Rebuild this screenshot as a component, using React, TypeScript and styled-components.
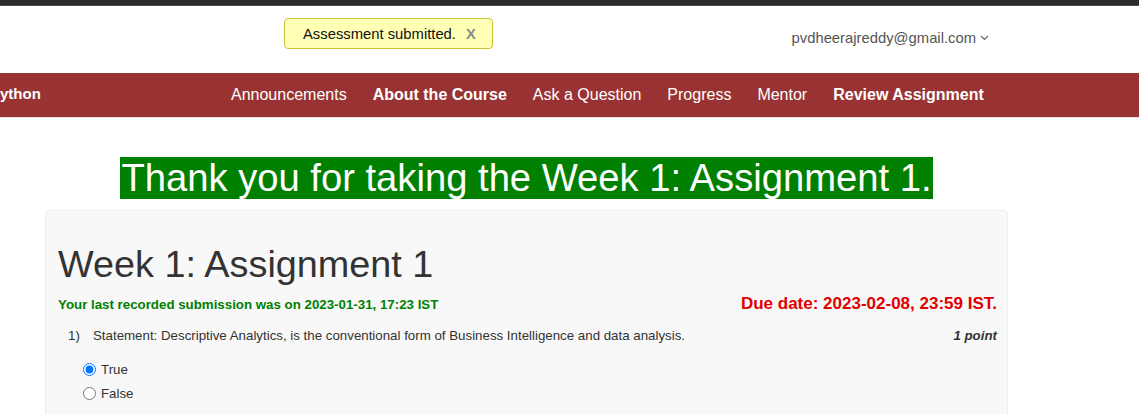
import React from "react";
import styled, { createGlobalStyle } from "styled-components";

const Global = createGlobalStyle`
  html, body { margin: 0; padding: 0; background: #fff; }
  body { font-family: "Liberation Sans", Arial, sans-serif; overflow: hidden; }
  * { box-sizing: border-box; }
`;

const TopStrip = styled.div`
  height: 6px;
  background: #2b2b2d;
  border-bottom: 1px solid #4a4a4c;
`;

const Header = styled.header`
  height: 67px;
  display: flex;
  align-items: flex-start;
`;

const Toast = styled.div`
  margin: 12px 0 0 284px;
  width: 209px;
  height: 31px;
  background: #ffffb5;
  border: 1px solid #c9c43a;
  border-radius: 4px;
  display: flex;
  align-items: center;
  padding-left: 18px;
  font-size: 14.8px;
  color: #111;
`;

const Close = styled.span`
  margin-left: 10px;
  font-weight: bold;
  color: #888;
  font-size: 14.8px;
`;

const User = styled.div`
  margin: 18px 150px 0 auto;
  display: flex;
  align-items: center;
  gap: 4px;
  font-size: 14.8px;
  color: #555;
  height: 28px;
`;

const NavBar = styled.nav`
  height: 45px;
  background: #993333;
  border-bottom: 1px solid #e3e3e3;
  display: flex;
  align-items: center;
`;

const Brand = styled.div`
  width: 218px;
  overflow: hidden;
  white-space: nowrap;
  font-weight: bold;
  color: #fff;
  font-size: 15px;
  text-indent: -10px;
  margin-top: -3px;
`;

const NavLink = styled.a<{ $bold?: boolean }>`
  padding: 0 13px;
  color: #fff;
  font-size: 16px;
  font-weight: ${(p) => (p.$bold ? "bold" : "normal")};
  text-decoration: none;
  white-space: nowrap;
`;

const Main = styled.main`
  width: 963px;
  margin-left: 45px;
  padding-top: 39px;
`;

const ThanksWrap = styled.div`
  display: flex;
  justify-content: center;
`;

const Thanks = styled.h1`
  margin: 0;
  background: #008000;
  color: #fff;
  font-size: 38.2px;
  font-weight: normal;
  line-height: 42px;
  padding: 0 1px;
  white-space: nowrap;
`;

const Card = styled.section`
  margin-top: 11px;
  background: #f8f8f8;
  border: 1px solid #ededed;
  border-radius: 4px;
  padding: 0 10px 20px 12px;
  height: 230px;
`;

const Title = styled.h2`
  margin: 32px 0 0 0;
  font-size: 37.8px;
  font-weight: normal;
  color: #333;
  line-height: 42px;
`;

const MetaRow = styled.div`
  display: flex;
  justify-content: space-between;
  align-items: center;
  margin-top: 9px;
`;

const Submitted = styled.div`
  color: #008000;
  font-weight: bold;
  font-size: 13.3px;
`;

const Due = styled.div`
  color: #e00000;
  font-weight: bold;
  font-size: 17px;
`;

const QRow = styled.div`
  display: flex;
  align-items: center;
  margin-top: 14px;
  font-size: 13.3px;
  color: #333;
  padding-left: 10px;
`;

const QNum = styled.span`
  width: 25px;
`;

const QText = styled.span`
  flex: 1;
`;

const Points = styled.span`
  font-weight: bold;
  font-style: italic;
`;

const Options = styled.div`
  margin-top: 17px;
  padding-left: 20px;
  display: flex;
  flex-direction: column;
  gap: 6px;
`;

const Option = styled.label`
  display: flex;
  align-items: center;
  font-size: 13.3px;
  color: #333;
  height: 18px;
  input {
    margin: 0 5px 0 5px;
    width: 13px;
    height: 13px;
    accent-color: #0075ff;
  }
`;

export default function App() {
  const links: [string, boolean][] = [
    ["Announcements", false],
    ["About the Course", true],
    ["Ask a Question", false],
    ["Progress", false],
    ["Mentor", false],
    ["Review Assignment", true],
  ];
  return (
    <>
      <Global />
      <TopStrip />
      <Header>
        <Toast>
          Assessment submitted.<Close>X</Close>
        </Toast>
        <User>
          pvdheerajreddy@gmail.com
          <svg width="9" height="6" viewBox="0 0 9 6">
            <path d="M1 1 L4.5 4.5 L8 1" fill="none" stroke="#666" strokeWidth="1.2" />
          </svg>
        </User>
      </Header>
      <NavBar>
        <Brand>Python</Brand>
        {links.map(([t, b]) => (
          <NavLink key={t} href="#" $bold={b}>
            {t}
          </NavLink>
        ))}
      </NavBar>
      <Main>
        <ThanksWrap>
          <Thanks>Thank you for taking the Week 1: Assignment 1.</Thanks>
        </ThanksWrap>
        <Card>
          <Title>Week 1: Assignment 1</Title>
          <MetaRow>
            <Submitted>Your last recorded submission was on 2023-01-31, 17:23 IST</Submitted>
            <Due>Due date: 2023-02-08, 23:59 IST.</Due>
          </MetaRow>
          <QRow>
            <QNum>1)</QNum>
            <QText>
              Statement: Descriptive Analytics, is the conventional form of Business Intelligence and data analysis.
            </QText>
            <Points>1 point</Points>
          </QRow>
          <Options>
            <Option>
              <input type="radio" name="q1" defaultChecked />
              True
            </Option>
            <Option>
              <input type="radio" name="q1" />
              False
            </Option>
          </Options>
        </Card>
      </Main>
    </>
  );
}
